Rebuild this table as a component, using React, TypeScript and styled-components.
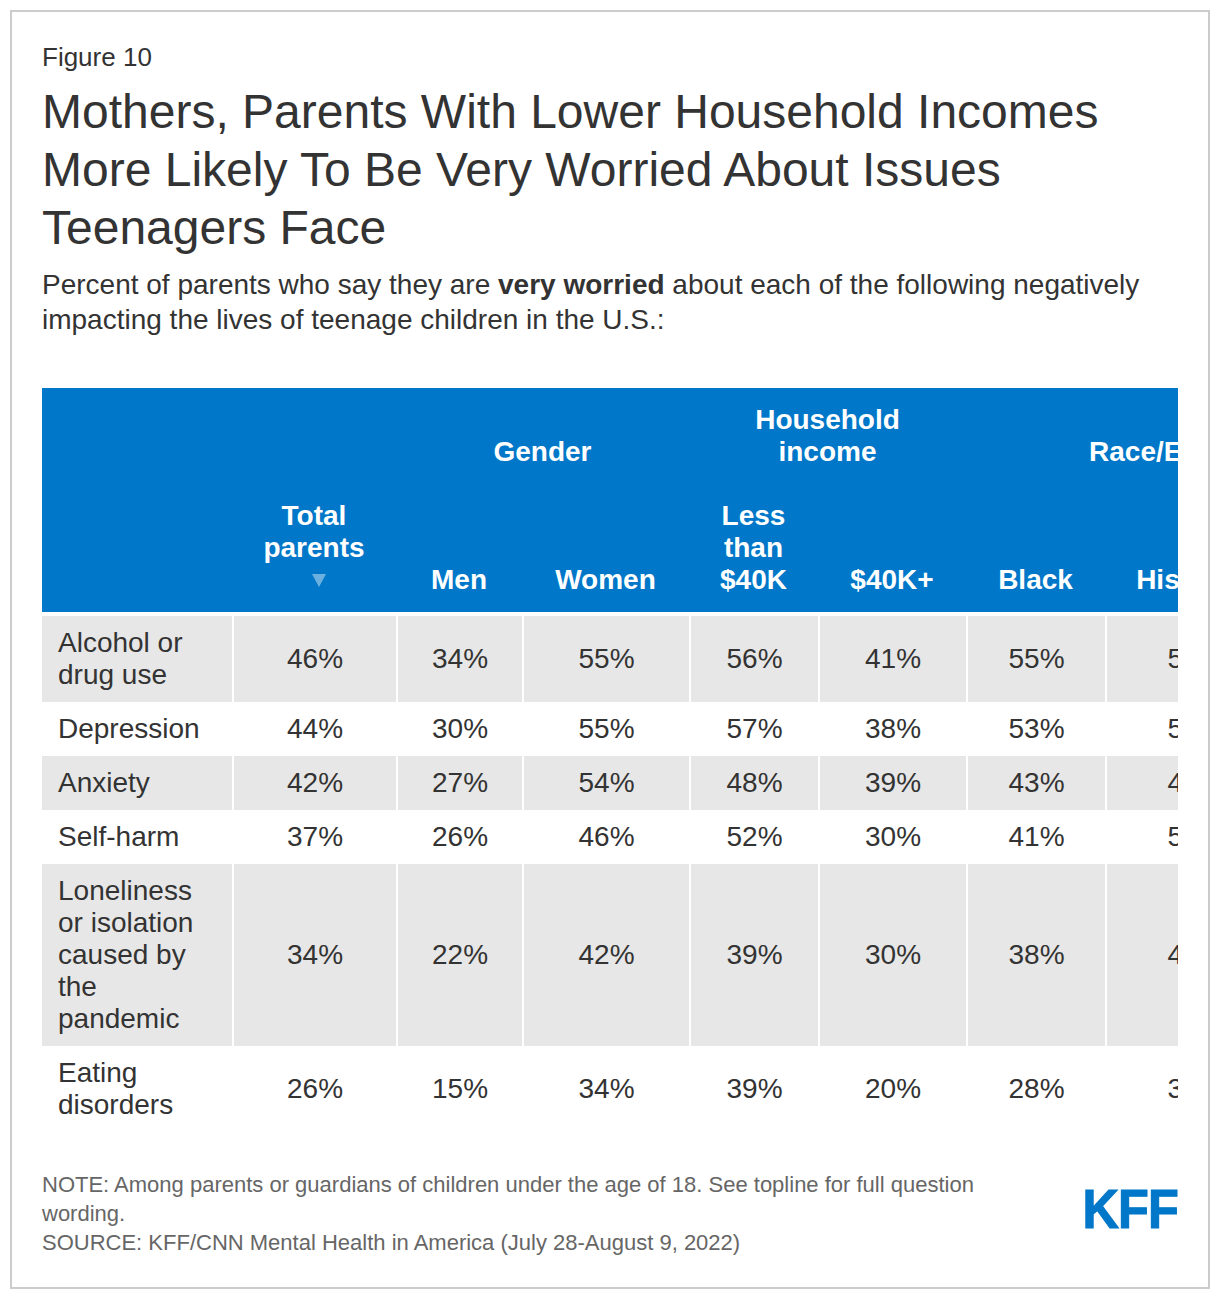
import styled, { createGlobalStyle } from "styled-components";

const GlobalStyle = createGlobalStyle`
  html, body {
    margin: 0;
    padding: 0;
    background: #fff;
  }
  body {
    font-family: "Liberation Sans", Arial, Helvetica, sans-serif;
    color: #333;
  }
  * {
    box-sizing: border-box;
  }
`;

const COLS = "190px 164px 126px 167px 129px 148px 139px 179px 121px";

const Frame = styled.div`
  margin: 10px;
  width: 1200px;
  border: 2px solid #cccccc;
  padding: 30px;
`;

const FigureLabel = styled.div`
  font-size: 26px;
  line-height: 30px;
  color: #333;
`;

const Title = styled.h1`
  margin: 11px 0 0;
  font-size: 48px;
  line-height: 58px;
  font-weight: 400;
  color: #333;
`;

const Subtitle = styled.p`
  margin: 10px 0 0;
  font-size: 28px;
  line-height: 35px;
  color: #333;
  b {
    font-weight: 700;
  }
`;

const TableWrap = styled.div`
  margin-top: 51px;
  width: 100%;
  overflow: hidden;
`;

const HeadGrid = styled.div`
  display: grid;
  grid-template-columns: ${COLS};
  width: max-content;
  background: #0077c8;
  color: #fff;
`;

const HeadCell = styled.div<{ $col: string; $row: string }>`
  grid-column: ${(p) => p.$col};
  grid-row: ${(p) => p.$row};
  align-self: end;
  padding: 16px;
  text-align: center;
  font-weight: 700;
  font-size: 28px;
  line-height: 32px;
`;

const SortArrow = styled.div`
  height: 32px;
  display: flex;
  align-items: center;
  justify-content: center;
  padding-left: 10px;
  &::after {
    content: "";
    border-left: 7px solid transparent;
    border-right: 7px solid transparent;
    border-top: 13px solid rgba(255, 255, 255, 0.42);
  }
`;

const Body = styled.div`
  margin-top: 4px;
`;

const Row = styled.div<{ $shade: boolean }>`
  display: grid;
  grid-template-columns: ${COLS};
  width: max-content;
  background: ${(p) => (p.$shade ? "#e7e7e7" : "#fff")};
`;

const LabelCell = styled.div`
  padding: 11px 16px;
  font-size: 28px;
  line-height: 32px;
  color: #333;
`;

const ValueCell = styled.div`
  display: flex;
  align-items: center;
  justify-content: center;
  border-left: 2px solid #fff;
  padding: 11px 16px;
  font-size: 28px;
  line-height: 32px;
  color: #333;
`;

const Footer = styled.div`
  display: flex;
  justify-content: space-between;
  align-items: flex-start;
  margin-top: 38px;
`;

const Notes = styled.div`
  max-width: 990px;
  font-size: 22px;
  line-height: 29px;
  color: #666;
`;

const Logo = styled.div`
  margin-top: 19px;
  font-weight: 700;
  font-size: 56px;
  line-height: 40px;
  letter-spacing: -1px;
  color: #0077c8;
  -webkit-text-stroke: 1.2px #0077c8;
  transform: scaleX(0.9);
  transform-origin: right center;
`;

const rows: [string, number[]][] = [
  ["Alcohol or drug use", [46, 34, 55, 56, 41, 55, 53, 43]],
  ["Depression", [44, 30, 55, 57, 38, 53, 52, 42]],
  ["Anxiety", [42, 27, 54, 48, 39, 43, 45, 40]],
  ["Self-harm", [37, 26, 46, 52, 30, 41, 50, 32]],
  ["Loneliness or isolation caused by the pandemic", [34, 22, 42, 39, 30, 38, 44, 30]],
  ["Eating disorders", [26, 15, 34, 39, 20, 28, 35, 24]],
];

const subHeads = ["Men", "Women", "Less than $40K", "$40K+", "Black", "Hispanic", "White"];

export default function App() {
  return (
    <>
      <GlobalStyle />
      <Frame>
        <FigureLabel>Figure 10</FigureLabel>
        <Title>
          Mothers, Parents With Lower Household Incomes More Likely To Be Very Worried About Issues
          Teenagers Face
        </Title>
        <Subtitle>
          Percent of parents who say they are <b>very worried</b> about each of the following
          negatively impacting the lives of teenage children in the U.S.:
        </Subtitle>
        <TableWrap>
          <HeadGrid>
            <HeadCell $col="1" $row="1 / 3" />
            <HeadCell $col="3 / 5" $row="1">Gender</HeadCell>
            <HeadCell $col="5 / 7" $row="1">Household income</HeadCell>
            <HeadCell $col="7 / 10" $row="1">Race/Ethnicity</HeadCell>
            <HeadCell $col="2" $row="2">
              Total parents
              <SortArrow />
            </HeadCell>
            {subHeads.map((h, i) => (
              <HeadCell key={h} $col={String(i + 3)} $row="2">
                {h}
              </HeadCell>
            ))}
          </HeadGrid>
          <Body>
            {rows.map(([label, values], i) => (
              <Row key={label} $shade={i % 2 === 0}>
                <LabelCell>{label}</LabelCell>
                {values.map((v, j) => (
                  <ValueCell key={j}>{v}%</ValueCell>
                ))}
              </Row>
            ))}
          </Body>
        </TableWrap>
        <Footer>
          <Notes>
            NOTE: Among parents or guardians of children under the age of 18. See topline for full
            question wording.
            <br />
            SOURCE: KFF/CNN Mental Health in America (July 28-August 9, 2022)
          </Notes>
          <Logo>KFF</Logo>
        </Footer>
      </Frame>
    </>
  );
}
